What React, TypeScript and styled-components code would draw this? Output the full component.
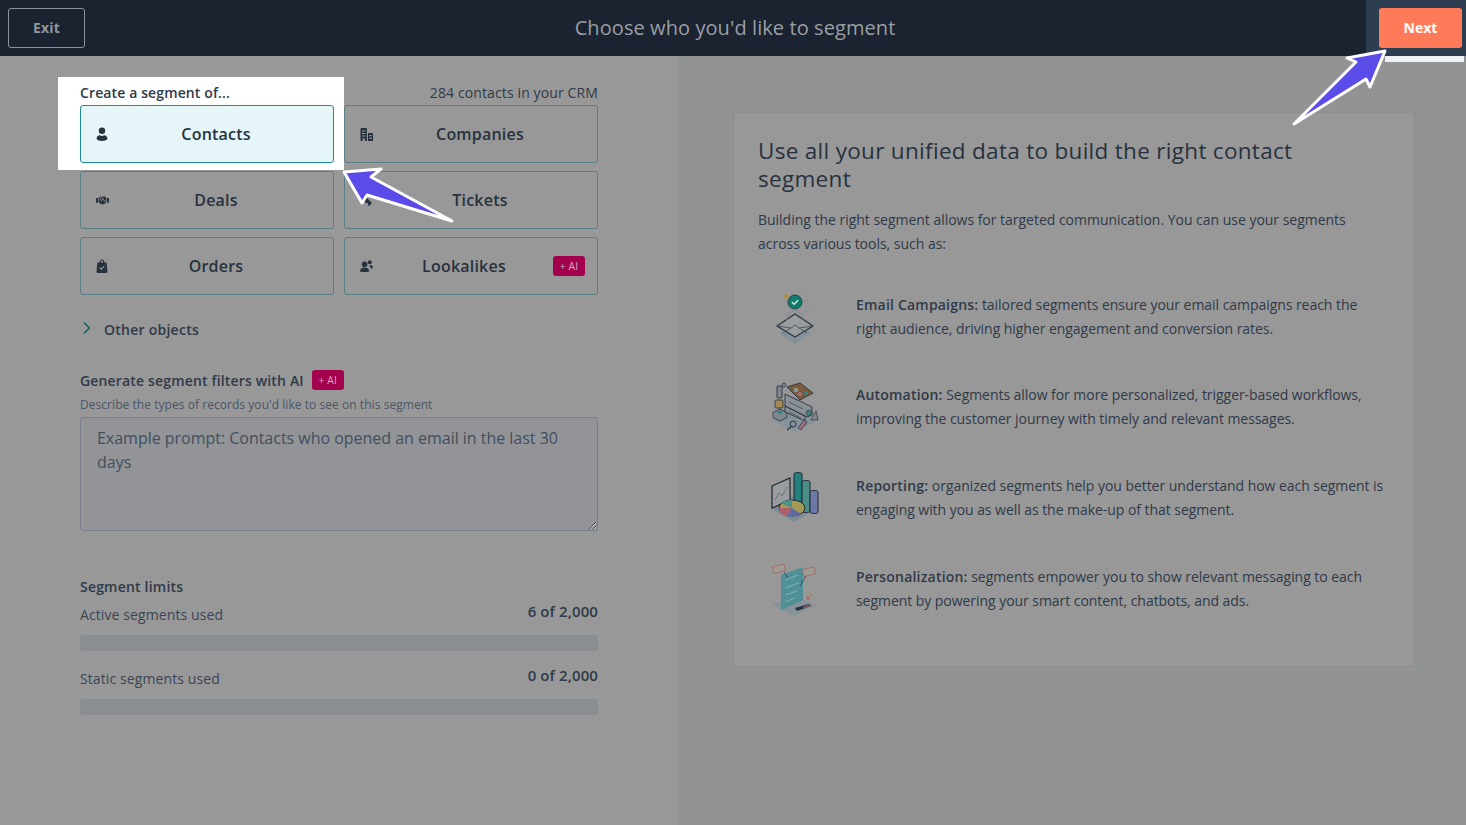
import React from "react";
import styled, { createGlobalStyle } from "styled-components";
import { FaHandshake } from "react-icons/fa";

const fontStack = `"Open Sans", "Noto Sans", sans-serif`;

const GlobalStyle = createGlobalStyle`
  html, body {
    margin: 0;
    padding: 0;
    height: 100%;
    background: #989898;
    font-family: ${fontStack};
  }
  * {
    box-sizing: border-box;
  }
`;

const Page = styled.div`
  position: relative;
  width: 1466px;
  height: 825px;
  overflow: hidden;
  display: flex;
  flex-direction: column;
`;

const Header = styled.header`
  height: 56px;
  flex: none;
  display: flex;
  align-items: center;
  justify-content: space-between;
  padding-left: 8px;
  background: #1b2330;
`;

const ExitButton = styled.button`
  width: 77px;
  height: 40px;
  padding-bottom: 2px;
  border: 1px solid #8b929b;
  border-radius: 3px;
  background: transparent;
  color: #8f959d;
  font: 700 14px ${fontStack};
  letter-spacing: 0.2px;
`;

const Title = styled.h1`
  margin: 0 0 0 -8px;
  flex: 1;
  padding: 0 0 2px 27px;
  text-align: center;
  font: 400 20px ${fontStack};
  letter-spacing: 0.08px;
  color: #9a9fa6;
`;

const NextSlot = styled.div`
  position: relative;
  width: 100px;
  height: 56px;
  padding: 8px 4px 8px 13px;
  background: #2d3e50;
  &::after {
    content: "";
    position: absolute;
    left: 19px;
    right: 2px;
    top: 56px;
    height: 6px;
    background: #eef0f6;
  }
`;

const NextButton = styled.button`
  width: 83px;
  height: 40px;
  padding-bottom: 2px;
  border: 0;
  border-radius: 3px;
  background: #ff7a59;
  color: #fff;
  font: 700 14px ${fontStack};
`;

const Body = styled.main`
  flex: 1;
  display: flex;
`;

const LeftPanel = styled.section`
  width: 678px;
  flex: none;
  padding: 28px 80px 0;
  color: #27323f;
`;

const PickerHead = styled.div`
  display: flex;
  justify-content: space-between;
  align-items: center;
  height: 21px;
  padding-bottom: 4px;
  font-size: 14px;
  letter-spacing: 0.12px;
  color: #2f3a48;
`;

const PickerTitle = styled.strong`
  font-weight: 600;
`;

const Picker = styled.div`
  position: relative;
  isolation: isolate;
`;

const Spot = styled.div`
  position: absolute;
  z-index: -1;
  left: -22px;
  top: -7px;
  width: 286px;
  height: 93px;
  background: #fff;
`;

const ObjectGrid = styled.div`
  display: grid;
  grid-template-columns: 254px 254px;
  grid-auto-rows: 58px;
  column-gap: 10px;
  row-gap: 8px;
`;

const ObjectButton = styled.button<{ $active?: boolean }>`
  display: flex;
  align-items: center;
  padding: 0 12px 0 15px;
  border: 1px solid ${(p) => (p.$active ? "#1f8a9c" : "#587e85")};
  border-radius: 3px;
  background: ${(p) => (p.$active ? "#e5f5f8" : "transparent")};
  color: #27323f;
  font: 600 16px ${fontStack};
  letter-spacing: 0.2px;
`;

const IconSlot = styled.span`
  width: 16px;
  flex: none;
  display: flex;
  justify-content: flex-start;
  svg {
    display: block;
  }
`;

const ObjectLabel = styled.span`
  flex: 1;
  padding-right: 1px;
  text-align: center;
`;

const AiBadge = styled.span`
  display: inline-flex;
  align-items: center;
  justify-content: center;
  width: 32px;
  height: 20px;
  border-radius: 3px;
  background: #a3004e;
  color: #d9a8bd;
  font: 400 10.5px ${fontStack};
  letter-spacing: 0;
`;

const OtherRow = styled.div`
  display: flex;
  align-items: center;
  gap: 13px;
  height: 20px;
  margin-top: 24px;
  padding-left: 2px;
  font-size: 14px;
  font-weight: 600;
  letter-spacing: 0.25px;
  color: #2f3a48;
  svg {
    margin-bottom: 3px;
  }
`;

const GenerateRow = styled.div`
  display: flex;
  align-items: center;
  gap: 8px;
  margin-top: 31px;
  height: 20px;
  font-size: 14px;
  font-weight: 600;
  letter-spacing: 0.16px;
  color: #2f3a48;
`;

const Hint = styled.div`
  margin-top: 6px;
  height: 18px;
  font-size: 12px;
  line-height: 18px;
  letter-spacing: 0.05px;
  color: #4a5665;
`;

const Prompt = styled.textarea`
  display: block;
  width: 518px;
  height: 114px;
  margin-top: 3px;
  padding: 8px 16px;
  border: 1px solid #77808a;
  border-radius: 3px;
  background: #929497;
  font: 400 16px/24px ${fontStack};
  letter-spacing: -0.02px;
  color: #414f5f;
  &::placeholder {
    color: #414f5f;
    opacity: 1;
  }
`;

const LimitsTitle = styled.div`
  margin-top: 46px;
  height: 20px;
  font-size: 14px;
  font-weight: 600;
  letter-spacing: 0.2px;
  color: #2f3a48;
`;

const LimitRow = styled.div`
  display: flex;
  justify-content: space-between;
  align-items: flex-start;
  margin-top: 8px;
  height: 20px;
  font-size: 14px;
  letter-spacing: 0.1px;
  color: #3a4654;
  strong {
    margin-top: -4px;
    font-size: 15px;
    font-weight: 600;
    color: #2f3a48;
  }
`;

const LimitBar = styled.div`
  height: 16px;
  margin-top: 10px;
  margin-bottom: 18px;
  border-radius: 3px;
  background: #8a8e93;
`;

const RightPanel = styled.section`
  flex: 1;
  padding: 57px 52px 0 56px;
  background: #929393;
`;

const InfoCard = styled.article`
  height: 553px;
  padding: 24px;
  border-radius: 3px;
  background: #989898;
  box-shadow: 0 0 3px rgba(0, 0, 0, 0.08);
  color: #27323f;
`;

const InfoTitle = styled.h2`
  margin: 0;
  max-width: 560px;
  font: 500 22.5px/28px ${fontStack};
  letter-spacing: 0.3px;
  color: #27323f;
`;

const InfoText = styled.p`
  margin: 15px 0 0;
  font-size: 14px;
  line-height: 24px;
  letter-spacing: -0.02px;
  color: #2f3a48;
`;

const UseList = styled.ul`
  margin: 37px 0 0;
  padding: 0;
  list-style: none;
  display: flex;
  flex-direction: column;
  gap: 43px;
`;

const UseItem = styled.li`
  display: flex;
  align-items: center;
  height: 48px;
  font-size: 14px;
  line-height: 24px;
  letter-spacing: -0.05px;
  color: #2f3a48;
  strong {
    font-weight: 600;
    letter-spacing: 0.2px;
  }
  &:first-child {
    margin-bottom: -1px;
  }
`;

const Art = styled.div`
  width: 98px;
  flex: none;
  padding-left: 12px;
  svg {
    display: block;
  }
`;

const ArrowLayer = styled.svg`
  position: absolute;
  inset: 0;
  pointer-events: none;
`;

const PersonIcon = () => (
  <svg width="12" height="14" viewBox="0 0 12 14" fill="#27323f">
    <circle cx="6" cy="3.800" r="3.200" />
    <path d="M0.600 11.600c0-2.400 1.800-3.200 3.400-3.400.6.600 1.300.8 2 .8s1.400-.2 2-.8c1.600.2 3.400 1 3.400 3.400 0 1.400-2.600 2.400-5.400 2.400S.6 13 .6 11.600z" />
  </svg>
);

const BuildingIcon = () => (
  <svg width="13" height="13" viewBox="0 0 13 13" fill="#27323f">
    <path d="M0.500 1.200C0.500.5 1 0 1.700 0h4c.7 0 1.200.5 1.200 1.200V13H5V10.500H2.600V13H.5z" />
    <path d="M8 5h4c.6 0 1 .4 1 1v7H8z" />
    <path fill="#989898" d="M2 2.400h3.400v1H2zM2 5h3.400v1H2zM2 7.600h3.400v1H2zM9.400 7h2.200v1.200H9.400zM9.400 9.800h2.200V11H9.400z" />
  </svg>
);

const TicketIcon = () => (
  <svg width="13" height="13" viewBox="0 0 13 13" fill="#27323f">
    <path d="M1 4l3-3 8 8-3 3-1-1a1.500 1.500 0 0 0-2-2z" />
  </svg>
);

const BagIcon = () => (
  <svg width="12" height="14" viewBox="0 0 12 14" fill="#27323f">
    <path d="M1.400 3.400h2.200C3.600 1.600 4.600.4 6 .4s2.400 1.200 2.400 3h2.200l.9 9.400c0 .7-.4 1.200-1.100 1.200H1.600C.9 14 .5 13.500.5 12.800zM4.800 3.400h2.400C7.200 2.300 6.800 1.500 6 1.500s-1.200.8-1.200 1.900z" />
    <path fill="none" stroke="#989898" strokeWidth="1.100" d="M3.800 8.500l1.600 1.600 2.900-3" />
  </svg>
);

const PeopleIcon = () => (
  <svg width="13" height="12" viewBox="0 0 13 12" fill="#27323f">
    <circle cx="4.600" cy="4.200" r="2.800" />
    <path d="M0 11.400c0-2.800 1.800-4 4.600-4s4.600 1.200 4.600 4c-1.300.4-3 .6-4.600.6S1.300 11.800 0 11.400z" />
    <circle cx="9.800" cy="2.200" r="2" />
    <path d="M9.400 5.200c2.200-.4 3.600.8 3.600 2.800-.8.3-1.500.4-2.300.4-.3-1.200-.8-2.200-1.300-3.200z" />
  </svg>
);

const ChevronIcon = () => (
  <svg width="9" height="14" viewBox="0 0 9 14" fill="none" stroke="#145c68" strokeWidth="1.500">
    <path d="M2 1.500L7.300 7 2 12.500" />
  </svg>
);

const MailArt = () => (
  <svg width="48" height="56" viewBox="-1 0 48 56">
    <path d="M8 44l16-10 16 10-16 11z" fill="#84919a" />
    <path d="M6 37L24 25l18 12-18 11z" fill="#9a9c9e" stroke="#2a3440" strokeWidth="1.300" strokeLinejoin="round" />
    <path d="M6 37l14 2 4-3 4 3 14-2M20 39l-8 5M28 39l8 5" fill="none" stroke="#3d4956" strokeWidth="0.800" />
    <path d="M16 31V26M32 31V26M16 26l8-5 8 5" fill="none" stroke="#7f8890" strokeWidth="0.800" />
    <circle cx="24" cy="13" r="7" fill="#0f7d6c" stroke="#1f3a3a" strokeWidth="0.800" />
    <path d="M20.800 13l2.300 2.200 4-4" fill="none" stroke="#d6e6e0" strokeWidth="1.400" />
    <path d="M15 3l1.100 2.900L19 7l-2.900 1.100L15 11l-1.100-2.900L11 7l2.900-1.100z" fill="#b08a3e" />
    <path d="M31 3v4M29 5h4" stroke="#7f9aa2" strokeWidth="1" />
    <path d="M33 13l4-3M35 17h5M33 21l3 2" stroke="#808890" strokeWidth="0.800" />
  </svg>
);

const AutomationArt = () => (
  <svg width="52" height="52" viewBox="2 0 52 52">
    <path d="M3 38L26 27l24 12-24 12z" fill="#86939a" />
    <rect x="9" y="5" width="5" height="12" rx="1" fill="#7f8790" stroke="#2a3440" strokeWidth="0.900" />
    <circle cx="16" cy="4" r="2" fill="#7f8790" stroke="#2a3440" strokeWidth="0.700" />
    <rect x="7" y="19" width="8" height="8" rx="1" fill="#a58a52" stroke="#2a3440" strokeWidth="0.800" />
    <path d="M12 28l7 3.500v5L12 40l-7-3.500v-5z" fill="#7d8890" stroke="#2a3440" strokeWidth="0.800" />
    <path d="M9 31l3-1.500 3 1.500-3 2z" fill="#2f7f78" />
    <path d="M17 13l27 13v8l-5 2L17 25zM17 25l20 10v5l-20-9z" fill="#8b8f96" stroke="#2a3440" strokeWidth="0.900" />
    <path d="M21 21l14 7M21 31l12 6" stroke="#3d4956" strokeWidth="0.800" />
    <path d="M19 6l13-4 13 10-13 7z" fill="#7b5b3e" stroke="#2a3440" strokeWidth="0.900" />
    <circle cx="28" cy="9" r="2.300" fill="#8a9a8e" />
    <circle cx="32" cy="13" r="2" fill="#a8707e" />
    <circle cx="38" cy="12" r="2" fill="#3f8080" />
    <path d="M30 47l6-8 3 2-6 8z" fill="#a06d80" stroke="#2a3440" strokeWidth="0.700" />
    <circle cx="25" cy="43" r="3" fill="none" stroke="#2a3440" />
    <path d="M19 49l5-4" stroke="#2a3440" strokeWidth="1.200" />
    <circle cx="41" cy="32" r="2.800" fill="#3f8080" stroke="#2a3440" strokeWidth="0.600" />
    <path d="M43 39l5-9 2 9z" fill="#7f8790" stroke="#2a3440" strokeWidth="0.700" />
  </svg>
);

const ReportArt = () => (
  <svg width="52" height="54" viewBox="2 1 52 54">
    <path d="M2 38L24 26l26 12-24 14z" fill="#7f8b93" />
    <path d="M4 16l18-8v22L4 38z" fill="#9b9c9e" stroke="#1f2833" strokeWidth="1.200" />
    <path d="M7 30l4-7 3 3 5-9" fill="none" stroke="#60707c" strokeWidth="0.900" />
    <path d="M26 4c0-2 8-2 8 0v31c0 2-8 2-8 0z" fill="#24807d" stroke="#1f2833" />
    <path d="M34 12c0-2 8-2 8 0v29c0 2-8 2-8 0z" fill="#4d8f86" stroke="#1f2833" />
    <path d="M42 22c0-2 8-2 8 0v20c0 2-8 2-8 0z" fill="#6e78a6" stroke="#1f2833" />
    <ellipse cx="24" cy="38" rx="13" ry="8" fill="#a39a55" stroke="#1f2833" />
    <path d="M24 38L11 38c0 6 6 8 8 8z" fill="#ad5f6e" />
    <path d="M24 38l-5 8c3 1 10 1 14-2z" fill="#5e6aa0" />
    <path d="M24 38L13 33c3-3 8-3 11-3z" fill="#4d9088" />
  </svg>
);

const PersonalArt = () => (
  <svg width="50" height="54" viewBox="0 0 50 54">
    <path d="M2 43l20-10 24 10-22 11z" fill="#86939a" />
    <path d="M11 13l22-8v33L11 48z" fill="#4f8f96" />
    <path d="M15 18l13-5M15 26l14-5M15 33l12-4M15 40l10-4" stroke="#7db0b4" strokeWidth="1.200" />
    <rect x="3" y="3" width="12" height="7" fill="#a09a94" stroke="#a0625a" strokeWidth="0.700" transform="rotate(-14 10 7)" />
    <rect x="33" y="6" width="12" height="7" fill="#a09a94" stroke="#a0625a" strokeWidth="0.700" transform="rotate(-14 40 10)" />
    <path d="M14 10l4 6M36 14l-6 10" stroke="#2a3440" strokeWidth="0.700" />
    <path d="M25 46l14-4 2 2-14 5z" fill="#27323f" />
    <path d="M33 45l7-3 1 1.500-7 3z" fill="#8a5a66" />
    <circle cx="38" cy="36" r="1.500" fill="#a85f52" />
    <circle cx="41" cy="33" r="1.300" fill="#a68a45" />
  </svg>
);

const objects = [
  { label: "Contacts", icon: <PersonIcon />, active: true },
  { label: "Companies", icon: <BuildingIcon /> },
  { label: "Deals", icon: <FaHandshake size={13} color="#27323f" /> },
  { label: "Tickets", icon: <TicketIcon /> },
  { label: "Orders", icon: <BagIcon /> },
  { label: "Lookalikes", icon: <PeopleIcon />, ai: true },
];

const uses = [
  {
    art: <MailArt />,
    title: "Email Campaigns:",
    text: " tailored segments ensure your email campaigns reach the right audience, driving higher engagement and conversion rates.",
  },
  {
    art: <AutomationArt />,
    title: "Automation:",
    text: " Segments allow for more personalized, trigger-based workflows, improving the customer journey with timely and relevant messages.",
  },
  {
    art: <ReportArt />,
    title: "Reporting:",
    text: " organized segments help you better understand how each segment is engaging with you as well as the make-up of that segment.",
  },
  {
    art: <PersonalArt />,
    title: "Personalization:",
    text: " segments empower you to show relevant messaging to each segment by powering your smart content, chatbots, and ads.",
  },
];

const App = () => {
  return (
    <Page>
      <GlobalStyle />
      <Header>
        <ExitButton type="button">Exit</ExitButton>
        <Title>Choose who you'd like to segment</Title>
        <NextSlot>
          <NextButton type="button">Next</NextButton>
        </NextSlot>
      </Header>
      <Body>
        <LeftPanel>
          <Picker>
            <Spot />
            <PickerHead>
              <PickerTitle>Create a segment of...</PickerTitle>
              <span>284 contacts in your CRM</span>
            </PickerHead>
            <ObjectGrid>
              {objects.map((o) => (
                <ObjectButton key={o.label} type="button" $active={o.active}>
                  <IconSlot>{o.icon}</IconSlot>
                  <ObjectLabel>{o.label}</ObjectLabel>
                  {o.ai && <AiBadge>+ AI</AiBadge>}
                </ObjectButton>
              ))}
            </ObjectGrid>
          </Picker>
          <OtherRow>
            <ChevronIcon />
            Other objects
          </OtherRow>
          <GenerateRow>
            Generate segment filters with AI
            <AiBadge>+ AI</AiBadge>
          </GenerateRow>
          <Hint>Describe the types of records you'd like to see on this segment</Hint>
          <Prompt placeholder="Example prompt: Contacts who opened an email in the last 30 days" />
          <LimitsTitle>Segment limits</LimitsTitle>
          <LimitRow>
            <span>Active segments used</span>
            <strong>6 of 2,000</strong>
          </LimitRow>
          <LimitBar />
          <LimitRow>
            <span>Static segments used</span>
            <strong>0 of 2,000</strong>
          </LimitRow>
          <LimitBar />
        </LeftPanel>
        <RightPanel>
          <InfoCard>
            <InfoTitle>Use all your unified data to build the right contact segment</InfoTitle>
            <InfoText>
              Building the right segment allows for targeted communication. You can use your segments
              across various tools, such as:
            </InfoText>
            <UseList>
              {uses.map((u) => (
                <UseItem key={u.title}>
                  <Art>{u.art}</Art>
                  <div>
                    <strong>{u.title}</strong>
                    {u.text}
                  </div>
                </UseItem>
              ))}
            </UseList>
          </InfoCard>
        </RightPanel>
      </Body>
      <ArrowLayer width="1466" height="825" viewBox="0 0 1466 825">
        <path
          d="M344 172L381 169L371 177L452 221L367 195L362 203Z"
          fill="#5b4be8"
          stroke="#fff"
          strokeWidth="3"
          strokeLinejoin="round"
        />
        <path
          d="M1385 51L1347 58L1356 62L1294 124L1366 79L1370 87Z"
          fill="#5b4be8"
          stroke="#fff"
          strokeWidth="3"
          strokeLinejoin="round"
        />
      </ArrowLayer>
    </Page>
  );
};

export default App;
